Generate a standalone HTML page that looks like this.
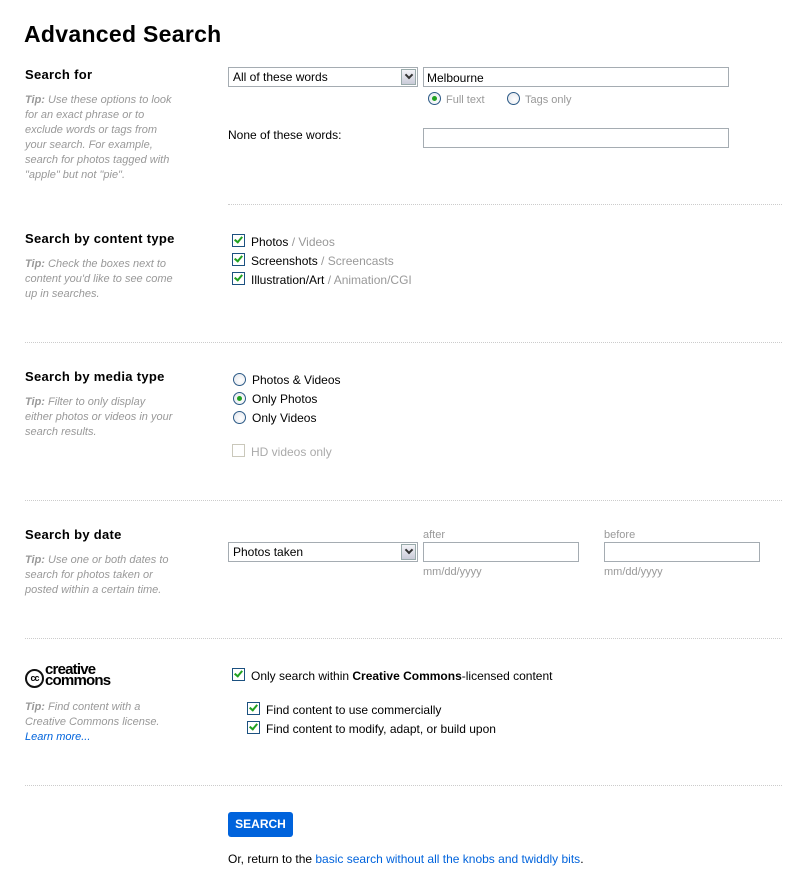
<!DOCTYPE html>
<html><head><meta charset="utf-8"><style>
body{margin:0;width:804px;height:874px;background:#fff;font-family:"Liberation Sans",Arial,sans-serif;font-size:12px;color:#000;position:relative;overflow:hidden}
.a{position:absolute;white-space:nowrap;line-height:14px}
h1{position:absolute;left:24px;top:20px;margin:0;font-size:23px;font-weight:bold;line-height:28px;letter-spacing:0.3px}
.h{font-size:13px;font-weight:bold;letter-spacing:.3px}
.tip{font-size:11px;font-style:italic;color:#999;line-height:15px;white-space:nowrap}
.tip b{color:#999}
.g{color:#999}
.div{position:absolute;height:0;border-top:1px dotted #ccc;right:22px}
.inp{position:absolute;border:1px solid #a5acb2;height:18px;background:#fff;box-sizing:content-box}
.sel{position:absolute;border:1px solid #a5acb2;height:18px;background:#fff;font-size:12px;line-height:18px;padding-left:4px;box-sizing:border-box}
.sel i{position:absolute;right:1px;top:1px;width:15px;height:16px;background:linear-gradient(#f3f3f7,#c9cbd8);border:1px solid #9aa;box-sizing:border-box}
.sel i:after{content:"";position:absolute;left:4px;top:2px;width:4px;height:4px;border-right:2px solid #333;border-bottom:2px solid #333;transform:rotate(45deg)}
.cb{position:absolute;width:11px;height:11px;border:1px solid #1c5180;background:#fff}
.cb:after{content:"";position:absolute;left:3px;top:0px;width:3px;height:6px;border-right:2px solid #21a121;border-bottom:2px solid #21a121;transform:rotate(40deg)}
.cb.off{border-color:#cac8bb}.cb.off:after{display:none}
.rd{position:absolute;width:11px;height:11px;border:1px solid #2c5a86;border-radius:50%;background:radial-gradient(circle at 60% 60%,#fff,#dfe3ea)}
.rd.on:after{content:"";position:absolute;left:3px;top:3px;width:5px;height:5px;border-radius:50%;background:#21a121}
a{color:#0063dc;text-decoration:none}
.btn{position:absolute;left:228px;top:812px;width:65px;height:25px;background:#0063dc;border-radius:3px;color:#fff;font-weight:bold;font-size:12px;line-height:25px;text-align:center}
</style></head><body>
<h1>Advanced Search</h1>

<div class="a h" style="left:25px;top:68px">Search for</div>
<div class="a tip" style="left:25px;top:93px"><b>Tip:</b> Use these options to look<br>for an exact phrase or to<br>exclude words or tags from<br>your search. For example,<br>search for photos tagged with<br>"apple" but not "pie".</div>
<div class="sel" style="left:228px;top:67px;width:190px;height:20px">All of these words<i></i></div>
<div class="inp" style="left:423px;top:67px;width:304px;padding-left:0"><span class="a" style="left:3px;top:3px">Melbourne</span></div>
<div class="rd on" style="left:428px;top:92px"></div><div class="a g" style="left:446px;top:93px;font-size:11px">Full text</div>
<div class="rd" style="left:507px;top:92px"></div><div class="a g" style="left:525px;top:93px;font-size:11px">Tags only</div>
<div class="a" style="left:228px;top:128px">None of these words:</div>
<div class="inp" style="left:423px;top:128px;width:304px"></div>
<div class="div" style="left:228px;top:204px"></div>

<div class="a h" style="left:25px;top:232px">Search by content type</div>
<div class="a tip" style="left:25px;top:257px"><b>Tip:</b> Check the boxes next to<br>content you'd like to see come<br>up in searches.</div>
<div class="cb" style="left:232px;top:234px"></div><div class="a" style="left:251px;top:235px">Photos <span class="g">/ Videos</span></div>
<div class="cb" style="left:232px;top:253px"></div><div class="a" style="left:251px;top:254px">Screenshots <span class="g">/ Screencasts</span></div>
<div class="cb" style="left:232px;top:272px"></div><div class="a" style="left:251px;top:273px">Illustration/Art <span class="g">/ Animation/CGI</span></div>
<div class="div" style="left:25px;top:342px"></div>

<div class="a h" style="left:25px;top:370px">Search by media type</div>
<div class="a tip" style="left:25px;top:395px"><b>Tip:</b> Filter to only display<br>either photos or videos in your<br>search results.</div>
<div class="rd" style="left:233px;top:373px"></div><div class="a" style="left:252px;top:373px">Photos &amp; Videos</div>
<div class="rd on" style="left:233px;top:392px"></div><div class="a" style="left:252px;top:392px">Only Photos</div>
<div class="rd" style="left:233px;top:411px"></div><div class="a" style="left:252px;top:411px">Only Videos</div>
<div class="cb off" style="left:232px;top:444px"></div><div class="a g" style="left:251px;top:445px;color:#aaa">HD videos only</div>
<div class="div" style="left:25px;top:500px"></div>

<div class="a h" style="left:25px;top:528px">Search by date</div>
<div class="a tip" style="left:25px;top:553px"><b>Tip:</b> Use one or both dates to<br>search for photos taken or<br>posted within a certain time.</div>
<div class="sel" style="left:228px;top:542px;width:190px;height:20px">Photos taken<i></i></div>
<div class="a g" style="left:423px;top:528px;font-size:11px">after</div>
<div class="inp" style="left:423px;top:542px;width:154px"></div>
<div class="a g" style="left:423px;top:565px;font-size:11px">mm/dd/yyyy</div>
<div class="a g" style="left:604px;top:528px;font-size:11px">before</div>
<div class="inp" style="left:604px;top:542px;width:154px"></div>
<div class="a g" style="left:604px;top:565px;font-size:11px">mm/dd/yyyy</div>
<div class="div" style="left:25px;top:638px"></div>

<div class="a" style="left:25px;top:666px;width:94px;height:22px">
<div class="a" style="left:0;top:3px;width:15px;height:15px;border:2px solid #111;border-radius:50%;font-size:9px;font-weight:bold;line-height:15px;text-align:center;letter-spacing:-1px">cc</div>
<div class="a" style="left:20px;top:-2px;font-size:15px;font-weight:bold;letter-spacing:-0.8px;line-height:11px">creative<br>commons</div>
</div>
<div class="a tip" style="left:25px;top:700px"><b>Tip:</b> Find content with a<br>Creative Commons license.<br><a href="#">Learn more...</a></div>
<div class="cb" style="left:232px;top:668px"></div><div class="a" style="left:251px;top:669px">Only search within <b>Creative Commons</b>-licensed content</div>
<div class="cb" style="left:247px;top:702px"></div><div class="a" style="left:266px;top:703px">Find content to use commercially</div>
<div class="cb" style="left:247px;top:721px"></div><div class="a" style="left:266px;top:722px">Find content to modify, adapt, or build upon</div>
<div class="div" style="left:25px;top:785px"></div>

<div class="btn">SEARCH</div>
<div class="a" style="left:228px;top:852px">Or, return to the <a href="#">basic search without all the knobs and twiddly bits</a>.</div>
</body></html>
